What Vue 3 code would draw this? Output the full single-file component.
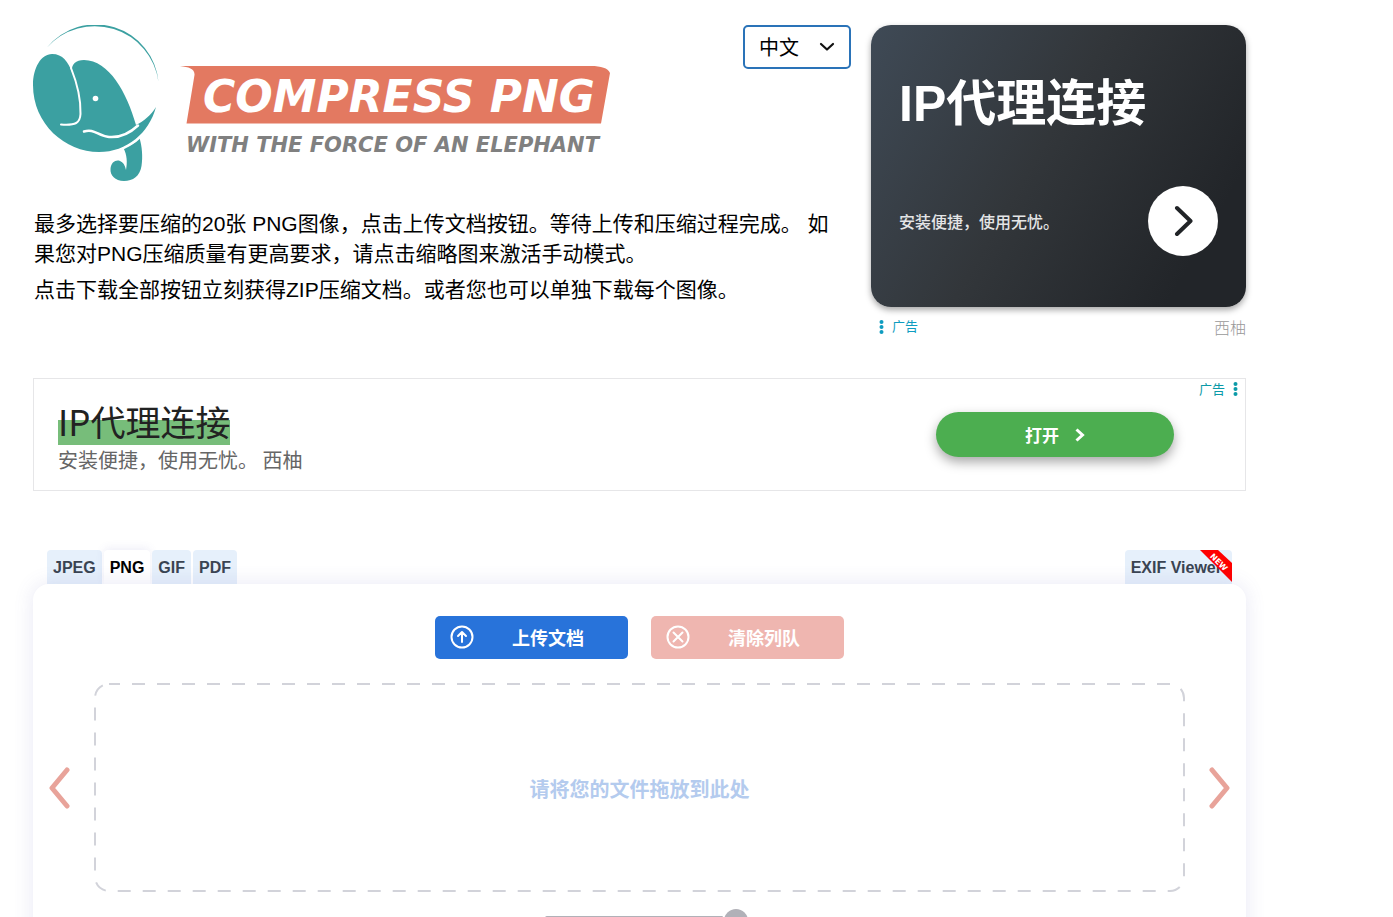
<template>
  <div class="page">
    <header class="header">
      <div class="intro">
        <div class="top-row">
          <a href="#" class="logo" aria-label="Compress PNG">
            <svg width="578" height="157" viewBox="0 0 578 157">
              <g fill="#3ba0a1">
                <path d="M14 22.500 A63 63 0 0 1 125.500 57 A64.300 64.300 0 0 0 14 22.500Z" />
                <path d="M0 60 C0 43 8 29 19 29 C30 29 35 37 39 47 C38 39 43 35 51 35 C76 35 94 68 103 100 C111 96 118 90 123 82 C116 108 94 127 66 127 C32 127 0 99 0 60Z" />
                <path d="M90.500 123 C97 121 102 118 106.500 113 C109 121 110 132 108.500 141 C107 151 100 156 91 156 C82 156 77 150 77.500 144 C78 137 83 134.500 87 136 C90 137 92 140 93 145 C94.500 137 94 130 90.500 123Z" />
              </g>
              <g fill="none" stroke="#fff" stroke-linecap="round" stroke-linejoin="round">
                <path stroke-width="2" d="M38 43 C44 58 48 74 47.500 89 C47 98 43 100.500 28 99.500" />
                <path stroke-width="2.500" d="M51 106.500 C61 103 65 111 76 112 C88 113 97 108 105 100.500" />
                <path stroke-width="2" d="M88 124.500 C99 120 108 113 115 104" />
              </g>
              <circle cx="62.500" cy="73.500" r="2.800" fill="#fff" />
              <path fill="#e37961" d="M147 41 H558 C568 41 575 43 577 48 L568 98.500 H153.500 L161.500 50 C162 44 156 42 147 41Z" />
              <text class="logo-name" x="170" y="87">COMPRESS PNG</text>
              <text class="logo-tag" x="153" y="127">WITH THE FORCE OF AN ELEPHANT</text>
            </svg>
          </a>
          <div class="lang">
            <select v-model="lang" aria-label="语言">
              <option value="zh">中文</option>
            </select>
            <svg width="16" height="10" viewBox="0 0 16 10" fill="none" stroke="#111" stroke-width="2.200" stroke-linecap="round" stroke-linejoin="round">
              <path d="M2 2 L8 7.500 L14 2" />
            </svg>
          </div>
        </div>
        <div class="description">
          <p>最多选择要压缩的20张 PNG图像，点击上传文档按钮。等待上传和压缩过程完成。 如果您对PNG压缩质量有更高要求，请点击缩略图来激活手动模式。</p>
          <p>点击下载全部按钮立刻获得ZIP压缩文档。或者您也可以单独下载每个图像。</p>
        </div>
      </div>

      <aside class="side-ad">
        <div class="ad-card">
          <h2>IP代理连接</h2>
          <div class="ad-card-foot">
            <span>安装便捷，使用无忧。</span>
            <button class="round-btn" aria-label="打开">
              <svg width="20" height="32" viewBox="0 0 20 32" fill="none" stroke="#212427" stroke-width="4" stroke-linecap="round" stroke-linejoin="round">
                <path d="M4 3 L17.500 16 L4 29" />
              </svg>
            </button>
          </div>
        </div>
        <div class="ad-meta">
          <a href="#" class="ad-label">
            <svg width="5" height="15" viewBox="0 0 5 15" fill="#0e9cc0"><circle v-for="y in dots" :key="y" cx="2.500" :cy="y" r="2" /></svg>
            广告
          </a>
          <span class="brand">西柚</span>
        </div>
      </aside>
    </header>

    <section class="wide-ad">
      <div class="wide-ad-text">
        <h3>IP代理连接</h3>
        <p>安装便捷，使用无忧。 西柚</p>
      </div>
      <button class="open-btn">
        打开
        <svg width="10" height="14" viewBox="0 0 10 14" fill="none" stroke="#fff" stroke-width="3">
          <path d="M1.500 1.500 L7.500 7 L1.500 12.500" />
        </svg>
      </button>
      <a href="#" class="ad-label corner">
        广告
        <svg width="5" height="15" viewBox="0 0 5 15" fill="#0b9aa8"><circle v-for="y in dots" :key="y" cx="2.500" :cy="y" r="2" /></svg>
      </a>
    </section>

    <nav class="tabs">
      <a v-for="tab in tabs" :key="tab" href="#" :class="{ active: tab === current }" @click.prevent="current = tab">{{ tab }}</a>
      <a href="#" class="exif">
        EXIF Viewer
        <svg class="ribbon" width="32" height="32" viewBox="0 0 32 32">
          <path fill="#f00" d="M0 0 H18 L32 13 V32Z" />
          <text x="19" y="15" transform="rotate(45 19 12)" text-anchor="middle">NEW</text>
        </svg>
      </a>
    </nav>

    <main class="panel">
      <div class="actions">
        <button class="upload">
          <svg width="24" height="24" viewBox="0 0 24 24" fill="none" stroke="#fff" stroke-width="2" stroke-linecap="round" stroke-linejoin="round">
            <circle cx="12" cy="12" r="10.500" />
            <path d="M12 17 V7.500 M8 11 L12 7 L16 11" />
          </svg>
          <span>上传文档</span>
        </button>
        <button class="clear" disabled>
          <svg width="24" height="24" viewBox="0 0 24 24" fill="none" stroke="#fff" stroke-width="2" stroke-linecap="round">
            <circle cx="12" cy="12" r="10.500" />
            <path d="M7.500 7.500 L16.500 16.500 M16.500 7.500 L7.500 16.500" />
          </svg>
          <span>清除列队</span>
        </button>
      </div>

      <div class="carousel">
        <button class="arrow" aria-label="上一个">
          <svg width="22" height="42" viewBox="0 0 22 42"><path d="M18 3 L3 21 L18 39" /></svg>
        </button>
        <div class="dropzone">
          <svg class="dashes" width="100%" height="100%"><rect x="1" y="1" rx="14" /></svg>
          <span>请将您的文件拖放到此处</span>
        </div>
        <button class="arrow" aria-label="下一个">
          <svg width="22" height="42" viewBox="0 0 22 42"><path d="M3 3 L18 21 L3 39" /></svg>
        </button>
      </div>

      <div class="slider-row">
        <input v-model="zoom" type="range" min="0" max="100" aria-label="缩放" />
      </div>
    </main>
  </div>
</template>

<script setup>
import { ref } from 'vue'

const lang = ref('zh')
const tabs = ['JPEG', 'PNG', 'GIF', 'PDF']
const current = ref('PNG')
const zoom = ref(100)
const dots = [2, 7, 12]
</script>

<style>
body {
  margin: 0;
  background: #fff;
}
</style>

<style scoped>
.page {
  box-sizing: border-box;
  height: 100vh;
  overflow: hidden;
  padding: 25px 147px 0 33px;
  font-family: "Liberation Sans", "Noto Sans CJK SC", sans-serif;
  color: #000;
}
h2, h3, p {
  margin: 0;
}
a {
  text-decoration: none;
}
button {
  border: none;
  padding: 0;
  font-family: inherit;
  cursor: pointer;
}
svg {
  display: block;
  flex: none;
}
.header {
  display: flex;
  gap: 20px;
}
.intro {
  flex: 1;
}
.top-row {
  display: flex;
  justify-content: space-between;
  align-items: flex-start;
}
.logo-name {
  font: italic bold 44px "DejaVu Sans", sans-serif;
  fill: #fff;
}
.logo-tag {
  font: italic bold 21px "DejaVu Sans", sans-serif;
  fill: #808080;
}
.lang {
  position: relative;
}
.lang select {
  appearance: none;
  width: 108px;
  height: 44px;
  padding: 2px 14px 0;
  border: 2px solid #2a73b8;
  border-radius: 5px;
  background: #fff;
  color: #000;
  font-family: inherit;
  font-size: 20px;
}
.lang svg {
  position: absolute;
  right: 16px;
  top: 17px;
  pointer-events: none;
}
.description {
  padding: 27px 7px 0 1px;
  font-size: 21px;
  line-height: 30px;
}
.description p + p {
  margin-top: 6px;
}
.side-ad {
  width: 375px;
}
.ad-card {
  box-sizing: border-box;
  display: flex;
  flex-direction: column;
  justify-content: space-between;
  height: 282px;
  padding: 44px 28px 51px;
  border-radius: 20px;
  background: linear-gradient(120deg, #3f4a56 0%, #32363a 45%, #222529 85%);
  box-shadow: 0 3px 6px rgba(0, 0, 0, 0.35);
  color: #fff;
}
.ad-card h2 {
  font-size: 50px;
  line-height: 70px;
}
.ad-card-foot {
  display: flex;
  justify-content: space-between;
  align-items: center;
  font-size: 16px;
  font-weight: 500;
  color: #e4e5e6;
}
.round-btn {
  display: flex;
  align-items: center;
  justify-content: center;
  width: 70px;
  height: 70px;
  border-radius: 50%;
  background: #fff;
}
.ad-meta {
  display: flex;
  justify-content: space-between;
  align-items: center;
  height: 40px;
  padding-left: 8px;
}
.ad-label {
  display: flex;
  align-items: center;
  gap: 8px;
  font-size: 13px;
  line-height: 20px;
  color: #0e9cc0;
}
.brand {
  font-family: "Noto Sans CJK SC", sans-serif;
  font-size: 16px;
  font-weight: 300;
  line-height: 20px;
  color: #999;
}
.wide-ad {
  position: relative;
  display: flex;
  justify-content: space-between;
  align-items: center;
  box-sizing: border-box;
  height: 113px;
  margin-top: 31px;
  padding: 0 71px 0 24px;
  border: 1px solid #e6e6e8;
  font-family: "Noto Sans CJK SC", sans-serif;
}
.wide-ad-text {
  padding-top: 6px;
}
.wide-ad h3 {
  width: fit-content;
  padding-bottom: 3px;
  font-size: 35px;
  font-weight: 400;
  line-height: 42px;
  color: #222;
  background: linear-gradient(transparent 20px, #77bd7a 20px);
}
.wide-ad p {
  font-size: 20px;
  line-height: 30px;
  color: #666;
}
.open-btn {
  display: flex;
  align-items: center;
  justify-content: center;
  gap: 16px;
  width: 238px;
  height: 45px;
  border-radius: 23px;
  background: #4cae50;
  box-shadow: 0 5px 12px rgba(0, 0, 0, 0.35);
  color: #fff;
  font-size: 17px;
  font-weight: bold;
}
.corner {
  position: absolute;
  top: 0;
  right: 7px;
  color: #0b9aa8;
}
.tabs {
  display: flex;
  gap: 2px;
  margin-top: 59px;
  padding: 0 14px;
}
.tabs a {
  padding: 2px 6px 0;
  border-radius: 4px 4px 0 0;
  background: #e6f0fb;
  color: #3a4452;
  font-size: 16px;
  font-weight: bold;
  line-height: 32px;
}
.tabs a.active {
  background: #fff;
  box-shadow: 0 -2px 8px rgba(90, 90, 180, 0.1);
  color: #000;
}
.tabs a.exif {
  position: relative;
  margin-left: auto;
  padding-right: 10px;
}
.ribbon {
  position: absolute;
  top: 0;
  right: 0;
}
.ribbon text {
  font: bold 8px "DejaVu Sans", sans-serif;
  fill: #fff;
}
.panel {
  position: relative;
  padding: 32px 0 40px;
  border-radius: 16px;
  background: #fff;
  box-shadow: 0 0 20px rgba(90, 90, 180, 0.14);
}
.actions {
  display: flex;
  justify-content: center;
  gap: 23px;
}
.actions button {
  display: flex;
  align-items: center;
  width: 193px;
  height: 43px;
  padding: 0 6px 2px 15px;
  border-radius: 5px;
  color: #fff;
  font-size: 18px;
  font-weight: bold;
}
.actions span {
  flex: 1;
}
.upload {
  background: #2873da;
}
.clear {
  background: #efb6b0;
}
.carousel {
  display: flex;
  margin-top: 24px;
}
.arrow {
  display: flex;
  align-items: center;
  justify-content: center;
  width: 61px;
  padding-right: 8px;
  background: none;
}
.arrow:last-child {
  padding: 0 0 0 8px;
}
.arrow path {
  fill: none;
  stroke: #e8a39a;
  stroke-width: 5;
  stroke-linecap: round;
  stroke-linejoin: round;
}
.dropzone {
  position: relative;
  display: flex;
  align-items: center;
  justify-content: center;
  box-sizing: border-box;
  flex: 1;
  height: 209px;
  padding-top: 2px;
  color: #b4cbee;
  font-size: 20px;
  font-weight: bold;
}
.dashes {
  position: absolute;
  inset: 0;
}
.dashes rect {
  width: calc(100% - 2px);
  height: calc(100% - 2px);
  fill: none;
  stroke: #d2d3da;
  stroke-width: 2;
  stroke-dasharray: 13 12;
  stroke-dashoffset: 2;
}
.slider-row {
  display: flex;
  justify-content: center;
  margin-top: 17px;
  padding-left: 13px;
}
.slider-row input {
  appearance: none;
  width: 203px;
  height: 24px;
  margin: 0;
  background: none;
}
.slider-row input::-webkit-slider-runnable-track {
  height: 10px;
  border-radius: 2px;
  background: #b1b1b8;
}
.slider-row input::-webkit-slider-thumb {
  appearance: none;
  width: 24px;
  height: 24px;
  margin-top: -7px;
  border-radius: 50%;
  background: #b1b1b8;
  box-shadow: 0 0 0 2px #fff;
}
</style>
